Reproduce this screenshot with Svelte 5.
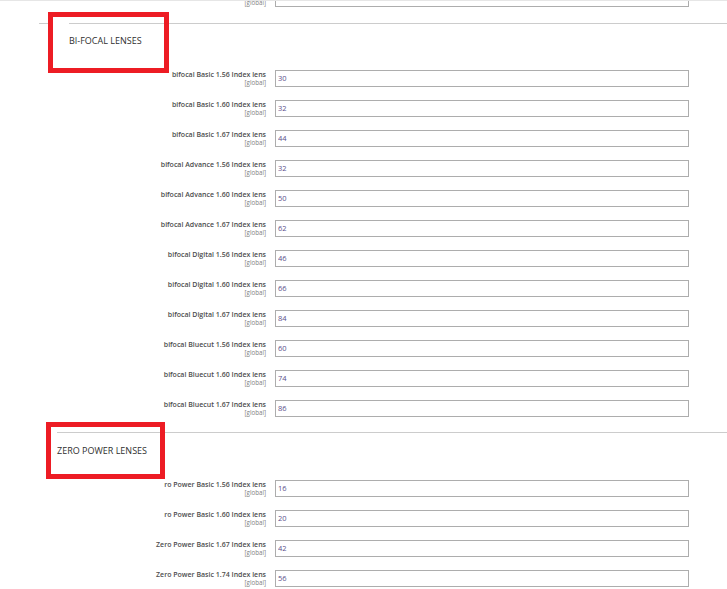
<script>
  const bifocal = [
    ['bifocal Basic 1.56 Index lens', '30'],
    ['bifocal Basic 1.60 Index lens', '32'],
    ['bifocal Basic 1.67 Index lens', '44'],
    ['bifocal Advance 1.56 Index lens', '32'],
    ['bifocal Advance 1.60 Index lens', '50'],
    ['bifocal Advance 1.67 Index lens', '62'],
    ['bifocal Digital 1.56 Index lens', '46'],
    ['bifocal Digital 1.60 Index lens', '66'],
    ['bifocal Digital 1.67 Index lens', '84'],
    ['bifocal Bluecut 1.56 Index lens', '60'],
    ['bifocal Bluecut 1.60 Index lens', '74'],
    ['bifocal Bluecut 1.67 Index lens', '86']
  ]
  const zero = [
    ['ro Power Basic 1.56 Index lens', '16'],
    ['ro Power Basic 1.60 Index lens', '20'],
    ['Zero Power Basic 1.67 Index lens', '42'],
    ['Zero Power Basic 1.74 Index lens', '56']
  ]
</script>

{#snippet row(label, value)}
  <div class="row">
    <div class="label">
      <span class="name">{label}</span>
      <span class="scope">[global]</span>
    </div>
    <input type="text" {value} />
  </div>
{/snippet}

<main class="page">
  <div class="lead">
    <span class="scope">[global]</span>
    <input type="text" />
  </div>

  <section class="first">
    <h3>BI-FOCAL LENSES</h3>
    <div class="mark mark-one"></div>
    {#each bifocal as item}
      {@render row(item[0], item[1])}
    {/each}
  </section>

  <section class="second">
    <h3>ZERO POWER LENSES</h3>
    <div class="mark mark-two"></div>
    {#each zero as item}
      {@render row(item[0], item[1])}
    {/each}
  </section>
</main>

<style>
  :global(body) {
    margin: 0;
    background: #fff;
    overflow: hidden;
  }

  .page {
    position: relative;
    height: 589px;
    overflow: hidden;
    border-top: 1px solid #e6e6e6;
    box-sizing: border-box;
    font-family: "Open Sans", sans-serif;
    color: #303030;
  }

  .lead {
    display: flex;
    justify-content: flex-end;
    align-items: flex-end;
    gap: 9px;
    height: 6px;
    width: 689px;
  }

  .lead input {
    flex: none;
    height: 17px;
  }

  section {
    position: relative;
    border-top: 1px solid #cccccc;
    margin-top: 16px;
  }

  .first {
    margin-left: 39px;
  }

  .second {
    margin-left: 57px;
    margin-top: 2px;
  }

  h3 {
    margin: 0;
    padding-top: 11px;
    height: 35px;
    font-size: 9px;
    line-height: 12px;
    font-weight: 400;
    color: #303030;
    position: relative;
    z-index: 1;
  }

  .first h3 {
    margin-left: 30px;
  }

  .second h3 {
    padding-top: 12px;
  }

  .mark {
    position: absolute;
    border: 5px solid #ed1c24;
    box-sizing: border-box;
  }

  .mark-one {
    left: 9px;
    top: -12px;
    width: 121px;
    height: 61px;
  }

  .mark-one::after {
    content: '';
    position: absolute;
    left: 0;
    top: 5px;
    width: 16px;
    height: 3px;
    background: #fff;
  }

  .mark-two {
    left: -11px;
    top: -11px;
    width: 119px;
    height: 57px;
  }

  .row {
    display: flex;
    justify-content: flex-end;
    gap: 9px;
    height: 30px;
    box-sizing: border-box;
    width: 650px;
  }

  .second .row {
    width: 632px;
  }

  .label {
    display: flex;
    flex-direction: column;
    align-items: flex-end;
    white-space: nowrap;
  }

  .name {
    font-size: 7px;
    line-height: 9px;
    font-weight: 600;
    color: #4d4d4d;
  }

  .scope {
    font-size: 6.2px;
    line-height: 8px;
    color: #808080;
  }

  input {
    width: 414px;
    height: 17px;
    box-sizing: border-box;
    flex: none;
    margin: 0;
    padding: 0 2px 1px;
    border: 1px solid #adadad;
    border-radius: 0;
    background: #fff;
    font-family: "Open Sans", sans-serif;
    font-size: 7.5px;
    color: #5a4f8a;
    outline: none;
  }
</style>
